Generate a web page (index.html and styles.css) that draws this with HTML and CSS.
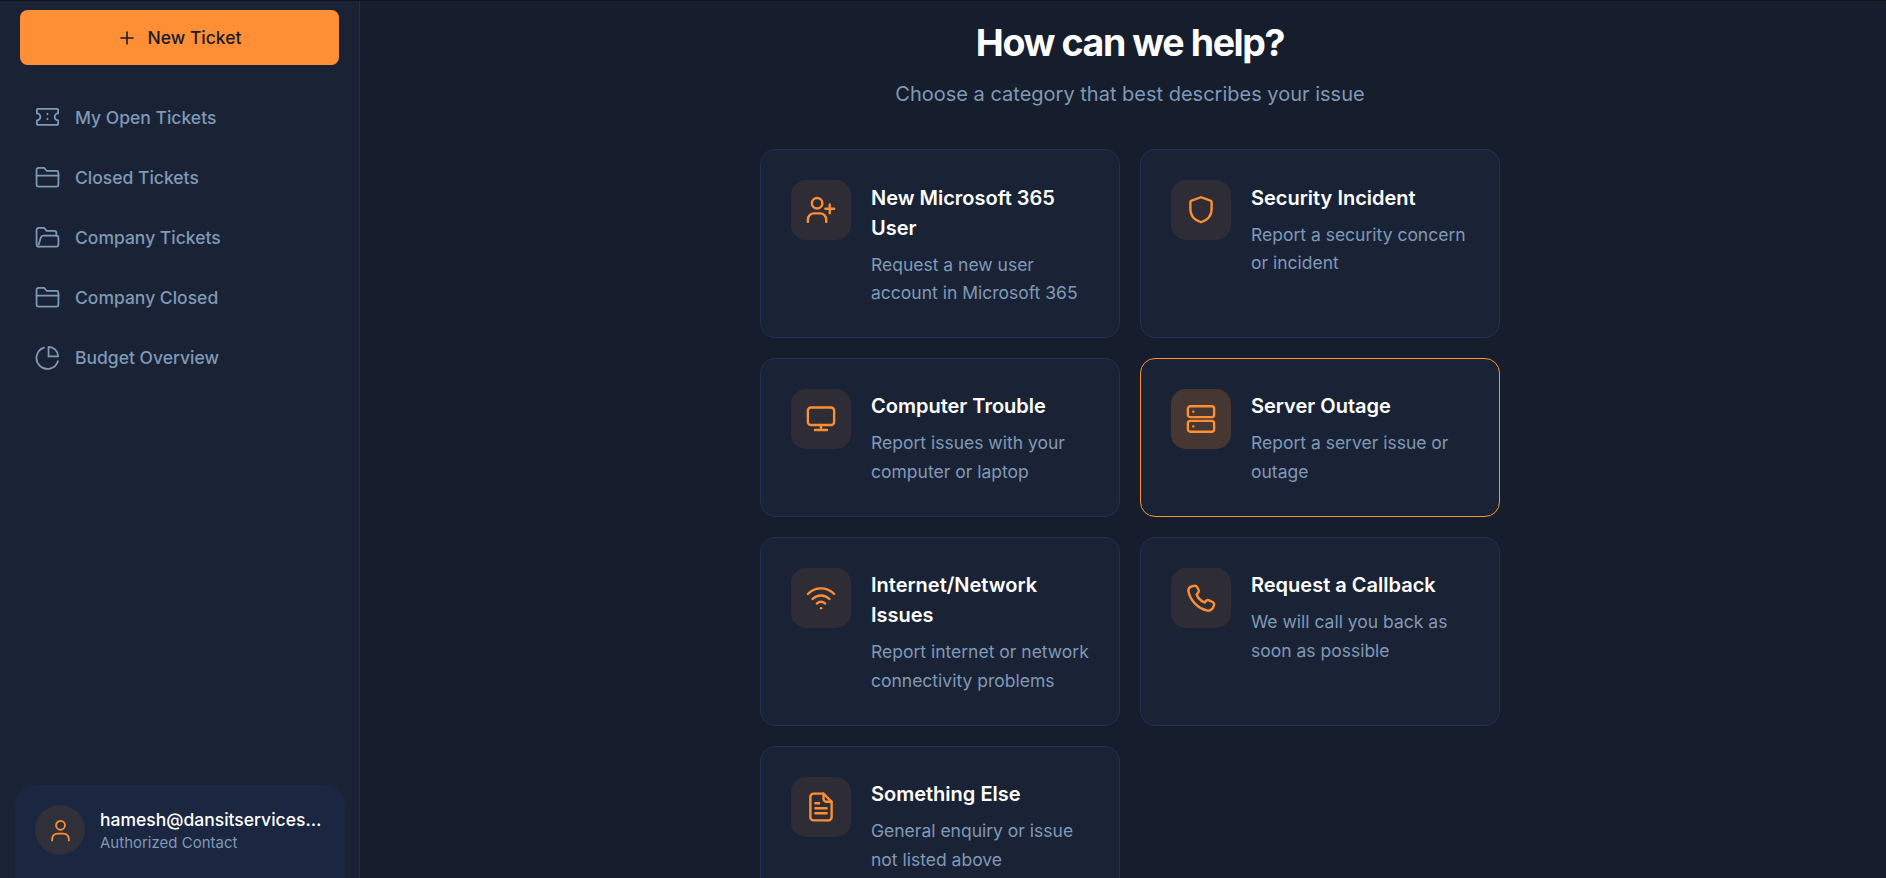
FILE: index.html
```html
<!DOCTYPE html>
<html lang="en">
<head>
    <meta charset="UTF-8">
    <meta name="viewport" content="width=device-width, initial-scale=1.0">
    <title>How can we help?</title>
    <link rel="stylesheet" href="styles.css">
</head>
<body>
    <div class="app">
        <!-- Sidebar -->
        <aside class="sidebar">
            <button type="button" class="new-ticket">
                <svg class="plus-icon" viewBox="0 0 14 14"><path d="M7 1v12M1 7h12"/></svg>
                New Ticket
            </button>
            <nav class="nav">
                <a class="nav-item" href="#">
                    <svg class="icon nav-icon" viewBox="0 0 24 24"><path d="M2.600 3.700h18.800a.8.800 0 0 1 .8.8v3.600a3.300 3.300 0 0 0 0 6.600v3.600a.8.800 0 0 1-.8.8H2.600a.8.800 0 0 1-.8-.8v-3.600a3.300 3.300 0 0 0 0-6.600V4.500a.8.800 0 0 1 .8-.8Z"/><path d="M12 8.400v.5M12 13.100v.5"/></svg>
                    My Open Tickets
                </a>
                <a class="nav-item" href="#">
                    <svg class="icon nav-icon" viewBox="0 0 24 24"><path d="M1.500 4.700a2 2 0 0 1 2-2h5.300l2.400 3h9.300a2 2 0 0 1 2 2v11a2 2 0 0 1-2 2h-17a2 2 0 0 1-2-2Z"/><path d="M1.500 10.200h21"/></svg>
                    Closed Tickets
                </a>
                <a class="nav-item" href="#">
                    <svg class="icon nav-icon" viewBox="0 0 24 24"><path d="M3.500 20.700a2 2 0 0 1-2-2V4.700a2 2 0 0 1 2-2h5.300l2.400 3h7.300a2 2 0 0 1 2 2v2.500"/><path d="M3.500 20.700h17a2 2 0 0 0 2-2v-6.500a2 2 0 0 0-2-2H8a2.500 2.500 0 0 0-2.400 1.800L3.500 18.700"/></svg>
                    Company Tickets
                </a>
                <a class="nav-item" href="#">
                    <svg class="icon nav-icon" viewBox="0 0 24 24"><path d="M1.500 4.700a2 2 0 0 1 2-2h5.300l2.400 3h9.300a2 2 0 0 1 2 2v11a2 2 0 0 1-2 2h-17a2 2 0 0 1-2-2Z"/><path d="M1.500 10.200h21"/></svg>
                    Company Closed
                </a>
                <a class="nav-item" href="#">
                    <svg class="icon nav-icon" viewBox="0 0 24 24"><path d="M22 15.500A10.500 10.500 0 1 1 8.500 2.500"/><path d="M13 1.800a9.200 9.200 0 0 1 9.200 9.200H13Z"/></svg>
                    Budget Overview
                </a>
            </nav>
            <div class="user-card">
                <div class="avatar">
                    <svg class="icon" viewBox="0 0 24 24"><circle cx="12" cy="7" r="4.300"/><path d="M4 21.500v-1.500a5 5 0 0 1 5-5h6a5 5 0 0 1 5 5v1.500"/></svg>
                </div>
                <div class="user-info">
                    <div class="user-name">hamesh@dansitservices.com.au</div>
                    <div class="user-role">Authorized Contact</div>
                </div>
            </div>
        </aside>

        <!-- Main content -->
        <main class="main">
            <h1>How can we help?</h1>
            <p class="subtitle">Choose a category that best describes your issue</p>
            <div class="categories">
                <a class="card" href="#">
                    <div class="card-icon">
                        <svg class="icon" viewBox="0 0 24 24"><circle cx="8.900" cy="6.600" r="4.200"/><path d="M1.500 21.500v-1.800a5 5 0 0 1 5-5h4.700a5 5 0 0 1 5 5v1.800"/><path d="M19 7.500v7M15.500 11h7"/></svg>
                    </div>
                    <div class="card-text">
                        <h3>New Microsoft 365 User</h3>
                        <p>Request a new user account in Microsoft 365</p>
                    </div>
                </a>
                <a class="card" href="#">
                    <div class="card-icon">
                        <svg class="icon" viewBox="0 0 24 24"><path d="M12 1.800l7.600 2.700a1.300 1.300 0 0 1 .9 1.200v5.800c0 4.800-3.300 8.400-8.500 10.300-5.200-1.900-8.500-5.500-8.500-10.300V5.700a1.300 1.300 0 0 1 .9-1.200Z"/></svg>
                    </div>
                    <div class="card-text">
                        <h3>Security Incident</h3>
                        <p>Report a security concern or incident</p>
                    </div>
                </a>
                <a class="card" href="#">
                    <div class="card-icon">
                        <svg class="icon" viewBox="0 0 24 24"><rect x="1.500" y="2.800" width="21" height="14" rx="2.500"/><path d="M12 16.800v4M7.200 20.800h9.600"/></svg>
                    </div>
                    <div class="card-text">
                        <h3>Computer Trouble</h3>
                        <p>Report issues with your computer or laptop</p>
                    </div>
                </a>
                <a class="card card-active" href="#">
                    <div class="card-icon">
                        <svg class="icon" viewBox="0 0 24 24"><rect x="1.500" y="1.800" width="21" height="8.700" rx="2"/><rect x="1.500" y="13.500" width="21" height="8.700" rx="2"/><path d="M5.800 6.100h.1M5.800 17.900h.1"/></svg>
                    </div>
                    <div class="card-text">
                        <h3>Server Outage</h3>
                        <p>Report a server issue or outage</p>
                    </div>
                </a>
                <a class="card" href="#">
                    <div class="card-icon">
                        <svg class="icon" viewBox="0 0 24 24"><path d="M1.500 8.800c6-6 15-6 21 0"/><path d="M5.200 12.800c4-3.800 9.600-3.800 13.600 0"/><path d="M8.700 16.400c2-1.700 4.600-1.700 6.600 0"/><path d="M12 20.100h.1"/></svg>
                    </div>
                    <div class="card-text">
                        <h3>Internet/Network Issues</h3>
                        <p>Report internet or network connectivity problems</p>
                    </div>
                </a>
                <a class="card" href="#">
                    <div class="card-icon">
                        <svg class="icon" viewBox="0 0 24 24"><path d="M6.200 2.300L4 3C2.500 3.500 1.800 5 2 6.500 3 13.500 9.500 20.500 17 22c2 .3 3.500-.5 4.500-2l.8-2c.4-1.100 0-2.200-1-2.800l-2.800-1.300c-1-.5-2.100-.3-2.800.7l-.7 1C12 14.500 9.500 12 8.500 9l.8-.8c.9-.8 1.100-1.900.7-2.900L8.800 3.200c-.5-.8-1.600-1.200-2.600-.9Z"/></svg>
                    </div>
                    <div class="card-text">
                        <h3>Request a Callback</h3>
                        <p>We will call you back as soon as possible</p>
                    </div>
                </a>
                <a class="card" href="#">
                    <div class="card-icon">
                        <svg class="icon" viewBox="0 0 24 24"><path d="M14 1.300H6A2.500 2.500 0 0 0 3.500 3.800v16.400A2.500 2.500 0 0 0 6 22.700h12a2.500 2.500 0 0 0 2.500-2.500V7.800Z"/><path d="M14 1.300v4a2.500 2.500 0 0 0 2.500 2.500h4"/><path d="M7.500 9h3M7.500 13h9M7.500 17h9"/></svg>
                    </div>
                    <div class="card-text">
                        <h3>Something Else</h3>
                        <p>General enquiry or issue not listed above</p>
                    </div>
                </a>
            </div>
        </main>
    </div>
</body>
</html>
```

FILE: styles.css
```css
* {
    box-sizing: border-box;
}
html, body {
    height: 100%;
    margin: 0;
    overflow: hidden;
}
body {
    font-family: Inter, "Liberation Sans", sans-serif;
    background-color: #161d2d;
    color: #fff;
}
a {
    text-decoration: none;
    color: inherit;
}
.app {
    display: flex;
    height: 100%;
    border-top: 1px solid #111418;
}
.icon {
    width: 30px;
    height: 30px;
    fill: none;
    stroke: #ff8f35;
    stroke-width: 1.9;
    stroke-linecap: round;
    stroke-linejoin: round;
}

/* Sidebar */
.sidebar {
    width: 360px;
    flex-shrink: 0;
    display: flex;
    flex-direction: column;
    padding: 9px 20px 0;
    background-color: #1a2336;
    border-right: 1px solid #22304e;
}
.new-ticket {
    display: flex;
    align-items: center;
    justify-content: center;
    gap: 14px;
    width: 319px;
    height: 55px;
    padding-left: 8px;
    border: none;
    border-radius: 7.5px;
    background-color: #ff8f35;
    color: #161d2d;
    font-family: inherit;
    font-size: 17.5px;
    font-weight: 500;
}
.plus-icon {
    width: 14px;
    height: 14px;
    fill: none;
    stroke: #161d2d;
    stroke-width: 1.6;
    stroke-linecap: round;
}
.nav {
    display: flex;
    flex-direction: column;
    margin-top: 22.5px;
}
.nav-item {
    display: flex;
    align-items: center;
    gap: 15px;
    height: 60px;
    padding-left: 15px;
    font-size: 17.5px;
    font-weight: 500;
    color: #7f99b6;
}
.nav-icon {
    width: 25px;
    height: 25px;
    stroke: #7f99b6;
    stroke-width: 1.7;
}
.user-card {
    display: flex;
    align-items: center;
    gap: 15px;
    margin: auto 0 0 -5px;
    width: 330px;
    height: 93px;
    padding: 0 20px 3px;
    border-radius: 20px 20px 0 0;
    background-color: #1b2640;
}
.avatar {
    width: 50px;
    height: 50px;
    flex-shrink: 0;
    display: flex;
    align-items: center;
    justify-content: center;
    border-radius: 50%;
    background-color: #30303a;
}
.avatar .icon {
    width: 25px;
    height: 25px;
    stroke-width: 1.7;
}
.user-info {
    min-width: 0;
    padding-top: 1.5px;
}
.user-name {
    font-size: 17.5px;
    font-weight: 500;
    line-height: 22px;
    white-space: nowrap;
    overflow: hidden;
    text-overflow: ellipsis;
}
.user-role {
    padding-top: 1.5px;
    font-size: 15px;
    line-height: 20px;
    color: #7f99b6;
}

/* Main */
.main {
    flex: 1;
    padding: 19px 0 0 14px;
    display: flex;
    flex-direction: column;
    align-items: center;
}
h1 {
    margin: 0;
    font-size: 37.5px;
    line-height: 45px;
    font-weight: 700;
    letter-spacing: -1.4px;
}
.subtitle {
    margin: 13.5px 0 40.5px;
    font-size: 20px;
    line-height: 30px;
    color: #7f99b6;
}
.categories {
    display: grid;
    grid-template-columns: 360px 360px;
    gap: 20px;
    width: 740px;
}
.card {
    display: flex;
    gap: 20px;
    padding: 30px 30px 29.5px;
    border: 1.25px solid #1f3154;
    border-radius: 15px;
    background-color: #1a2336;
}
.card-active {
    border-color: #ff8f35;
}
.card-icon {
    width: 60px;
    height: 60px;
    flex-shrink: 0;
    display: flex;
    align-items: center;
    justify-content: center;
    border-radius: 15px;
    background-color: #2e2d35;
}
.card-active .card-icon {
    background-color: #473733;
}
.card-text {
    padding-top: 2.5px;
}
.card h3 {
    margin: 0 0 8px;
    font-size: 20px;
    line-height: 30px;
    font-weight: 600;
}
.card p {
    margin: 0;
    font-size: 17.5px;
    line-height: 28.44px;
    color: #7f99b6;
}
```
